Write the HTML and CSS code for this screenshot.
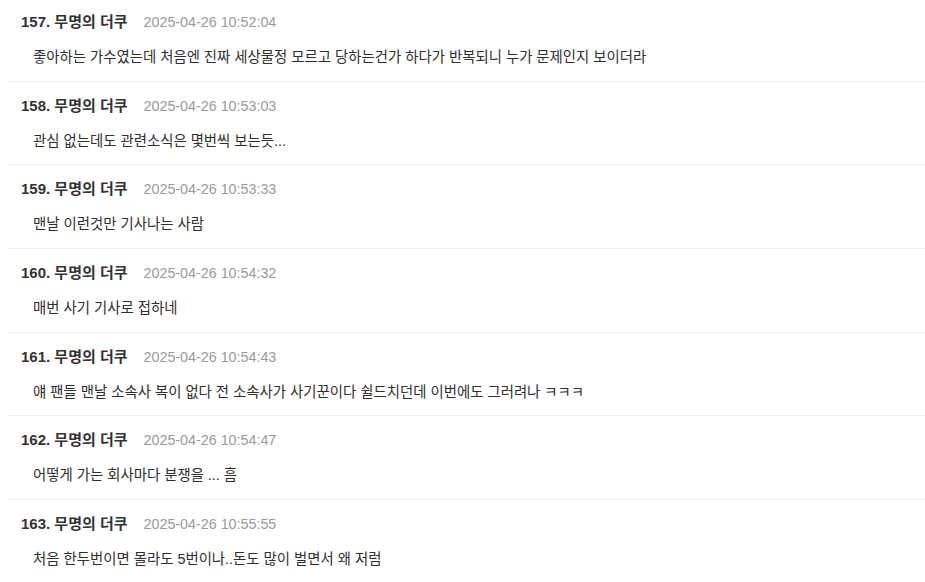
FILE: index.html
```html
<!DOCTYPE html>
<html lang="ko">
<head>
<meta charset="utf-8">
<link rel="stylesheet" href="styles.css">
</head>
<body>
<div class="list">
  <div class="item">
    <div class="head"><span class="name">157. 무명의 더쿠</span><span class="date">2025-04-26 10:52:04</span></div>
    <div class="body">좋아하는 가수였는데 처음엔 진짜 세상물정 모르고 당하는건가 하다가 반복되니 누가 문제인지 보이더라</div>
  </div>
  <div class="item">
    <div class="head"><span class="name">158. 무명의 더쿠</span><span class="date">2025-04-26 10:53:03</span></div>
    <div class="body">관심 없는데도 관련소식은 몇번씩 보는듯...</div>
  </div>
  <div class="item">
    <div class="head"><span class="name">159. 무명의 더쿠</span><span class="date">2025-04-26 10:53:33</span></div>
    <div class="body">맨날 이런것만 기사나는 사람</div>
  </div>
  <div class="item">
    <div class="head"><span class="name">160. 무명의 더쿠</span><span class="date">2025-04-26 10:54:32</span></div>
    <div class="body">매번 사기 기사로 접하네</div>
  </div>
  <div class="item">
    <div class="head"><span class="name">161. 무명의 더쿠</span><span class="date">2025-04-26 10:54:43</span></div>
    <div class="body">얘 팬들 맨날 소속사 복이 없다 전 소속사가 사기꾼이다 쉴드치던데 이번에도 그러려나 ㅋㅋㅋ</div>
  </div>
  <div class="item">
    <div class="head"><span class="name">162. 무명의 더쿠</span><span class="date">2025-04-26 10:54:47</span></div>
    <div class="body">어떻게 가는 회사마다 분쟁을 ... 흠</div>
  </div>
  <div class="item">
    <div class="head"><span class="name">163. 무명의 더쿠</span><span class="date">2025-04-26 10:55:55</span></div>
    <div class="body">처음 한두번이면 몰라도 5번이나..돈도 많이 벌면서 왜 저럼</div>
  </div>
</div>
</body>
</html>
```

FILE: styles.css
```css
html, body {
  margin: 0;
  padding: 0;
  background: #ffffff;
  overflow: hidden;
}
body {
  font-family: "Liberation Sans", "Noto Sans CJK KR", sans-serif;
  color: #333333;
}
.list {
  margin: -1.83px 0 0 8px;
}
.item {
  padding: 13.83px 0 13.84px 13px;
  border-bottom: 1px solid #efefef;
}
.head {
  display: flex;
  align-items: baseline;
  gap: 16px;
  height: 20px;
  line-height: 20px;
}
.name {
  font-size: 15px;
  font-weight: bold;
  color: #333333;
}
.date {
  font-size: 14.3px;
  color: #9a9a9a;
}
.body {
  margin-top: 15px;
  padding-left: 12px;
  height: 20px;
  line-height: 20px;
  font-size: 14.4px;
  color: #2e2e2e;
}
```
